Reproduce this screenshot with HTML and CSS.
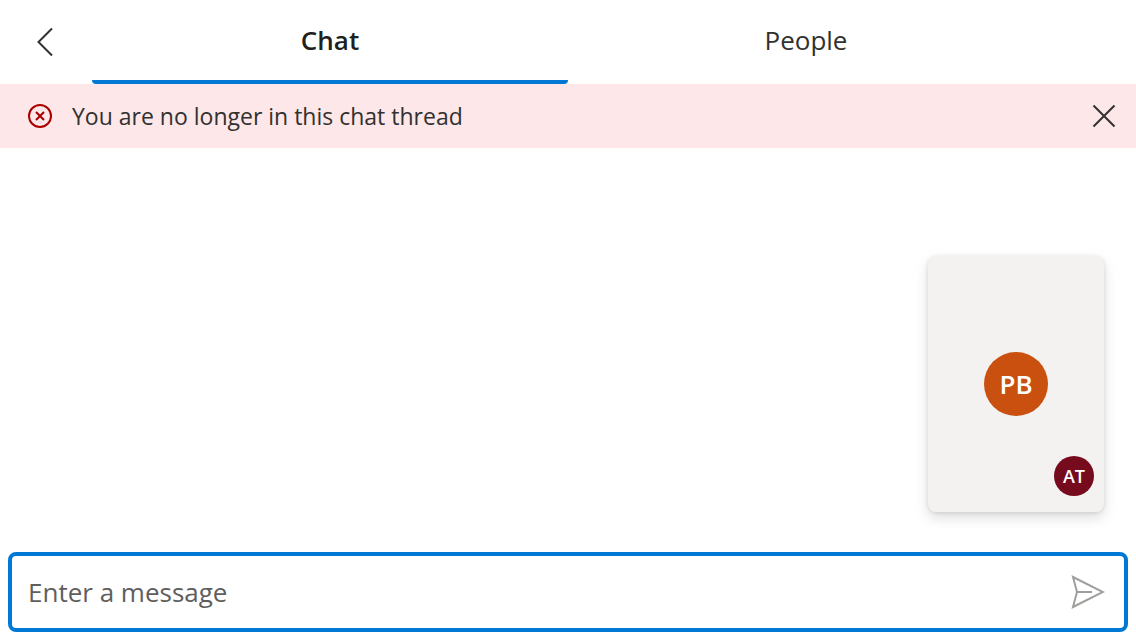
FILE: index.html
```html
<!DOCTYPE html>
<html lang="en">
<head>
<meta charset="utf-8">
<meta name="viewport" content="width=device-width, initial-scale=1">
<title>Chat</title>
<link rel="stylesheet" href="styles.css">
</head>
<body>
<div class="app">
  <header class="header">
    <button class="back" type="button" aria-label="Back">
      <svg width="20" height="32" viewBox="0 0 20 32" aria-hidden="true"><path d="M16 2.500 2.500 16 16 29.500"/></svg>
    </button>
    <div class="tabs" role="tablist">
      <button class="tab tab-active" type="button" role="tab" aria-selected="true">Chat</button>
      <button class="tab" type="button" role="tab" aria-selected="false">People</button>
    </div>
  </header>
  <div class="notice" role="alert">
    <svg class="notice-icon" width="24" height="24" viewBox="0 0 24 24" aria-hidden="true"><circle cx="12" cy="12" r="11"/><path d="M8 8l8 8M16 8l-8 8"/></svg>
    <p class="notice-text">You are no longer in this chat thread</p>
    <button class="dismiss" type="button" aria-label="Dismiss">
      <svg width="24" height="24" viewBox="0 0 24 24" aria-hidden="true"><path d="M1.500 1.500l21 21M22.500 1.500l-21 21"/></svg>
    </button>
  </div>
  <main class="thread">
    <div class="call-tile">
      <span class="avatar avatar-remote">PB</span>
      <span class="avatar avatar-local">AT</span>
    </div>
  </main>
  <form class="composer">
    <input class="message" type="text" placeholder="Enter a message" aria-label="Enter a message">
    <button class="send" type="button" aria-label="Send">
      <svg width="34" height="34" viewBox="0 0 34 34" aria-hidden="true"><path d="M2 2 32 17 2 32 6 17ZM6 17H21"/></svg>
    </button>
  </form>
</div>
</body>
</html>
```
FILE: styles.css
```css
* {
  box-sizing: border-box;
}

body {
  margin: 0;
  background: #fff;
  color: #323130;
  font-family: "Segoe UI", "Open Sans", "Noto Sans", sans-serif;
}

button,
input {
  margin: 0;
  padding: 0;
  border: 0;
  background: none;
  color: inherit;
  font: inherit;
}

svg {
  display: block;
  fill: none;
  stroke: currentColor;
  stroke-width: 2;
}

.app {
  display: flex;
  flex-direction: column;
  min-height: 100vh;
}

.header {
  display: grid;
  grid-template-columns: 92px 1fr 92px;
  height: 84px;
}

.back {
  display: grid;
  place-items: center;
}

.tabs {
  display: grid;
  grid-template-columns: 1fr 1fr;
}

.tab {
  border-bottom: 4px solid transparent;
  font-size: 26px;
  line-height: 36px;
}

.tab-active {
  border-color: #0078d4;
  border-radius: 0 0 4px 4px;
  color: #201f1e;
  font-weight: 600;
}

.notice {
  display: flex;
  align-items: center;
  gap: 20px;
  height: 64px;
  padding: 0 20px 0 28px;
  background: #fde7e9;
}

.notice-icon {
  color: #a80000;
}

.notice-text {
  flex: 1;
  margin: 0;
  font-size: 23px;
  line-height: 32px;
}

.thread {
  display: flex;
  flex: 1;
  align-items: flex-end;
  justify-content: flex-end;
  padding: 40px 32px;
}

.call-tile {
  position: relative;
  display: grid;
  place-items: center;
  width: 176px;
  height: 256px;
  border-radius: 8px;
  background: #f3f2f1;
  box-shadow: 0 6px 14px rgba(0, 0, 0, 0.13), 0 1px 4px rgba(0, 0, 0, 0.11);
}

.avatar {
  display: grid;
  place-items: center;
  border-radius: 50%;
  color: #fff;
  font-weight: 600;
}

.avatar-remote {
  width: 64px;
  height: 64px;
  background: #ca5010;
  font-size: 26px;
}

.avatar-local {
  position: absolute;
  right: 10px;
  bottom: 16px;
  width: 40px;
  height: 40px;
  background: #750b1c;
  font-size: 18px;
}

.composer {
  display: flex;
  align-items: center;
  height: 80px;
  margin: 0 8px 8px;
  padding: 0 19px 0 16px;
  border: 4px solid #0078d4;
  border-radius: 8px;
}

.message {
  flex: 1;
  min-width: 0;
  outline: 0;
  font-size: 26px;
  line-height: 36px;
}

.message::placeholder {
  color: #605e5c;
  opacity: 1;
}

.send {
  color: #a19f9d;
}
```
